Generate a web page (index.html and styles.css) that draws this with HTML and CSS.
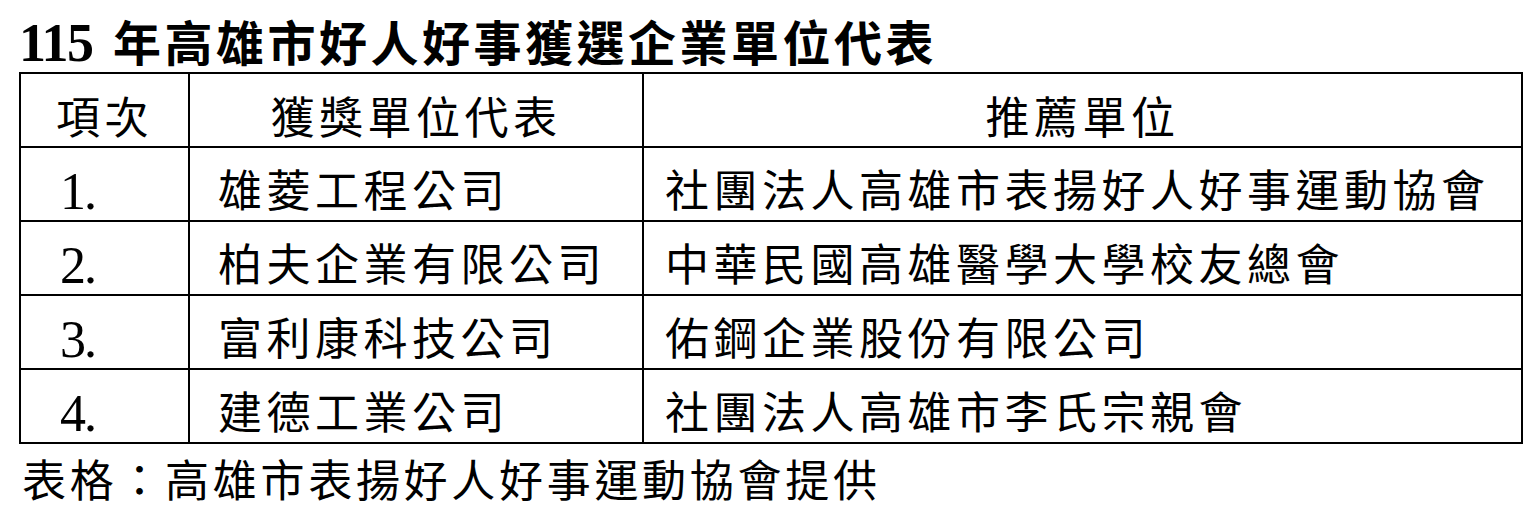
FILE: index.html
```html
<!DOCTYPE html>
<html lang="zh-Hant">
<head>
<meta charset="utf-8">
<title>115 年高雄市好人好事獲選企業單位代表</title>
<link rel="stylesheet" href="styles.css">
</head>
<body>
<div class="page">
  <h1 class="title"><span class="num">115</span> 年高雄市好人好事獲選企業單位代表</h1>
  <table class="awards">
    <colgroup>
      <col class="c-no">
      <col class="c-name">
      <col class="c-rec">
    </colgroup>
    <thead>
      <tr><th>項次</th><th>獲獎單位代表</th><th>推薦單位</th></tr>
    </thead>
    <tbody>
      <tr><td class="no">1.</td><td class="name">雄菱工程公司</td><td class="rec">社團法人高雄市表揚好人好事運動協會</td></tr>
      <tr><td class="no">2.</td><td class="name">柏夫企業有限公司</td><td class="rec">中華民國高雄醫學大學校友總會</td></tr>
      <tr><td class="no">3.</td><td class="name">富利康科技公司</td><td class="rec">佑鋼企業股份有限公司</td></tr>
      <tr><td class="no">4.</td><td class="name">建德工業公司</td><td class="rec">社團法人高雄市李氏宗親會</td></tr>
    </tbody>
  </table>
  <p class="source">表格：高雄市表揚好人好事運動協會提供</p>
</div>
</body>
</html>
```

FILE: styles.css
```css
html, body {
  margin: 0;
  padding: 0;
  background: #ffffff;
  color: #000000;
  font-family: "Noto Sans CJK TC", "Noto Sans CJK SC", sans-serif;
}

.page {
  padding-left: 19px;
}

.title {
  margin: 0;
  padding-top: 8px;
  height: 64px;
  font-size: 48px;
  line-height: 64px;
  font-weight: 700;
  letter-spacing: 3.5px;
  white-space: nowrap;
}

.num {
  font-family: "Liberation Serif", serif;
  font-size: 54px;
  line-height: 0;
  letter-spacing: -1.5px;
  margin-right: 6px;
}

.awards {
  border-collapse: collapse;
  table-layout: fixed;
  width: 1502px;
  border: 2px solid #000000;
}

.c-no { width: 169px; }
.c-name { width: 454px; }
.c-rec { width: 879px; }

.awards th,
.awards td {
  border: 2px solid #000000;
  padding: 9px 0 0 0;
  height: 63px;
  line-height: 63px;
  font-size: 44px;
  font-weight: 400;
  letter-spacing: 4.5px;
  white-space: nowrap;
  vertical-align: top;
  text-align: left;
}

.awards th {
  padding-top: 11px;
  height: 61px;
  line-height: 61px;
  text-align: center;
}

.awards td.no {
  font-family: "Liberation Serif", serif;
  font-size: 52px;
  letter-spacing: -2px;
  padding-left: 39px;
  padding-top: 15px;
  height: 57px;
  line-height: 57px;
}

.awards td.name {
  padding-left: 28px;
}

.awards td.rec {
  padding-left: 21px;
}

.source {
  margin: 0;
  padding: 4px 0 0 3px;
  font-size: 44px;
  line-height: 60px;
  letter-spacing: 3.7px;
  white-space: nowrap;
}
```
